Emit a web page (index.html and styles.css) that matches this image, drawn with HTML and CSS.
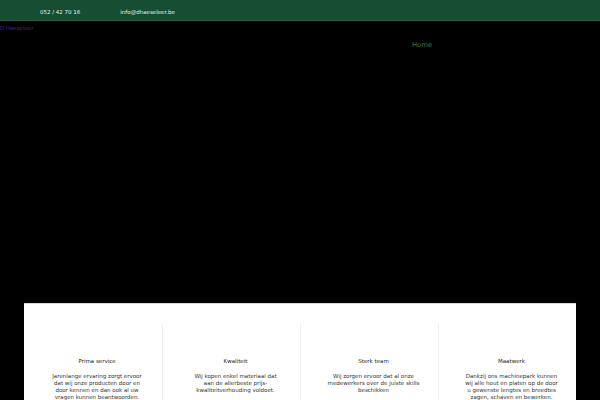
FILE: index.html
```html
<!DOCTYPE html>
<html lang="nl">
<head>
<meta charset="utf-8">
<title>D'Haeseleer</title>
<link rel="stylesheet" href="styles.css">
</head>
<body>
<div class="topbar">
  <span class="contact">052 / 42 70 16</span>
  <span class="contact">info@dhaeseleer.be</span>
</div>
<header class="header">
  <a class="logo" href="#">D'Haeseleer</a>
  <nav class="nav"><a class="nav-link" href="#">Home</a></nav>
</header>
<section class="features">
  <div class="feature">
    <h3 class="feature-title">Prima service</h3>
    <p class="feature-text">Jarenlange ervaring zorgt ervoor dat wij onze producten door en door kennen en dan ook al uw vragen kunnen beantwoorden.</p>
  </div>
  <div class="feature">
    <h3 class="feature-title">Kwaliteit</h3>
    <p class="feature-text">Wij kopen enkel materiaal dat aan de allerbeste prijs-kwaliteitverhouding voldoet.</p>
  </div>
  <div class="feature">
    <h3 class="feature-title">Sterk team</h3>
    <p class="feature-text">Wij zorgen ervoor dat al onze medewerkers over de juiste skills beschikken</p>
  </div>
  <div class="feature">
    <h3 class="feature-title">Maatwerk</h3>
    <p class="feature-text">Dankzij ons machinepark kunnen wij alle hout en platen op de door u gewenste lengtes en breedtes zagen, schaven en bewerken.</p>
  </div>
</section>
</body>
</html>
```
FILE: styles.css
```css
html, body {
  margin: 0;
  padding: 0;
  background: #000;
  font-family: "DejaVu Sans", Verdana, sans-serif;
  overflow: hidden;
}
.topbar {
  height: 20px;
  background: #164d33;
  border-bottom: 1px solid #2d5b3e;
  display: flex;
  align-items: flex-start;
  padding: 0 0 0 40px;
  gap: 40px;
}
.contact {
  color: #e6eee9;
  font-size: 5.5px;
  line-height: 8px;
  margin-top: 8px;
}
.header {
  height: 282px;
  display: flex;
  flex-direction: column;
}
.logo {
  color: #52208a;
  font-size: 5.5px;
  line-height: 8px;
  margin-top: 3px;
  text-decoration: none;
  align-self: flex-start;
}
.nav {
  padding-left: 412px;
  margin-top: 0;
}
.nav-link {
  color: #3f7e45;
  font-size: 6.8px;
  line-height: 9px;
  text-decoration: none;
}
.features {
  margin: 0 24px;
  background: #fff;
  border-top: 1px solid #d8d8d8;
  display: grid;
  grid-template-columns: repeat(4, 1fr);
  padding-top: 20px;
  height: 120px;
}
.feature {
  border-left: 1px solid #eeeeee;
  text-align: center;
  padding: 33px 6px 0 14px;
  color: #333;
}
.feature:first-child {
  border-left: none;
}
.feature-title {
  font-size: 5.5px;
  font-weight: normal;
  line-height: 8px;
  margin: 0 0 8px;
  color: #222;
}
.feature-text {
  font-size: 5.5px;
  line-height: 7px;
  margin: 0 auto;
  max-width: 93px;
  color: #333;
}
```
